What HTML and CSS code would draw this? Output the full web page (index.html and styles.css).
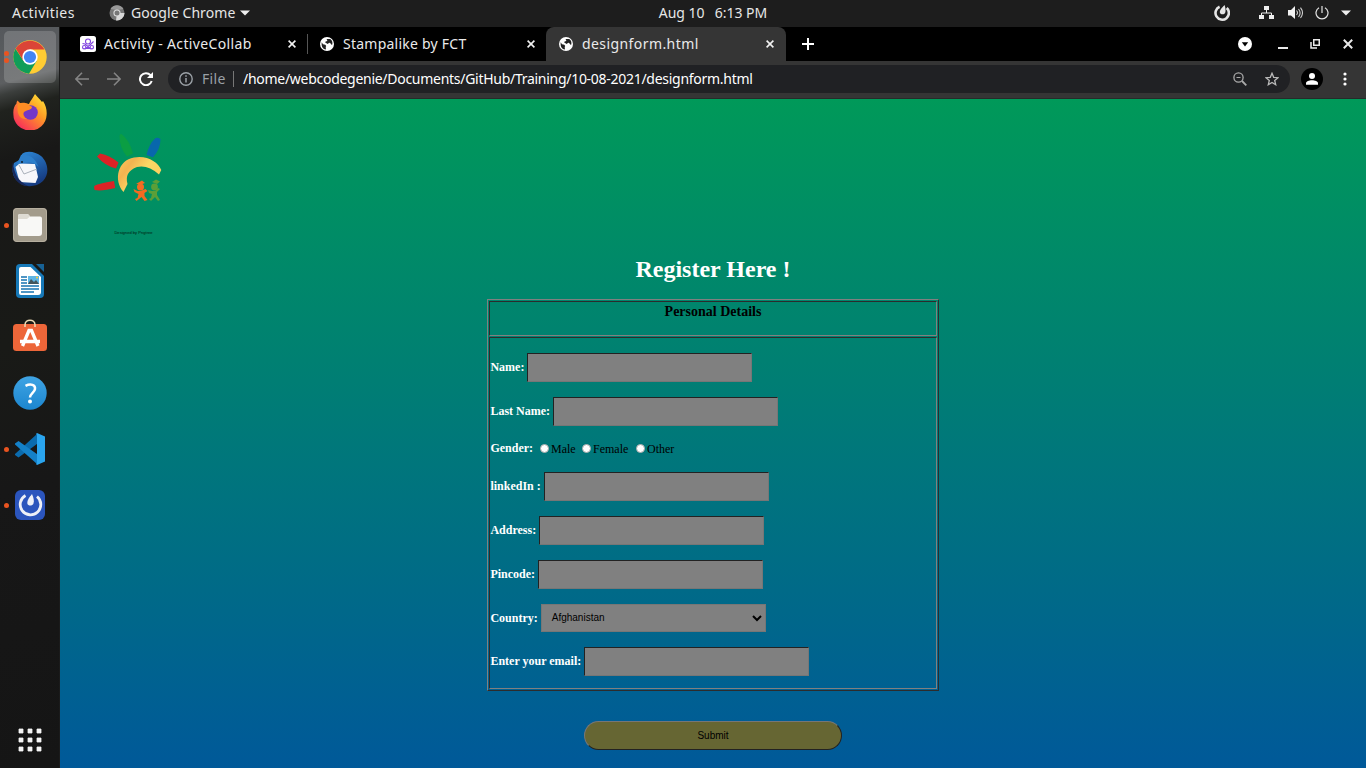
FILE: index.html
```html
<!DOCTYPE html>
<html lang="en">
<head>
<meta charset="utf-8">
<title>designform.html</title>
<link rel="stylesheet" href="styles.css">
</head>
<body>
<svg width="0" height="0" class="defs">
  <defs>
    <symbol id="globe" viewBox="0 0 14 14"><circle cx="7" cy="7" r="7" fill="#fff"/><path d="M1.7 5.2 3 7.3l2.3.4.9 1.4-.5 1 .3 2.4C3 12.200 1.200 9.700 1.700 5.200ZM6.600 2h3.600c2.300 1.400 2.700 3.900 1.900 6-1.200-.2-1.400-2.200-2.900-2.200L7.700 7 5.200 5.600l.4-1 1.800-.7Z" fill="#222"/></symbol>
    <symbol id="x" viewBox="0 0 8 8"><path d="m.6.6 6.800 6.800M7.400.6.6 7.400" stroke="#f1f1f1" stroke-width="1.600"/></symbol>
    <linearGradient id="blue" x2="0" y2="1"><stop stop-color="#3fa4e4"/><stop offset="1" stop-color="#1c86cf"/></linearGradient>
    <linearGradient id="fox" x1="1" y1="0" x2=".2" y2="1"><stop stop-color="#fff13b"/><stop offset=".45" stop-color="#ff9b25"/><stop offset="1" stop-color="#f7275e"/></linearGradient>
    <linearGradient id="bird" x2=".5" y2="1"><stop stop-color="#2f8fe0"/><stop offset="1" stop-color="#163c82"/></linearGradient>
    <linearGradient id="sun" x2="1" y2=".6"><stop stop-color="#fbc95c"/><stop offset=".3" stop-color="#f3b350"/><stop offset=".6" stop-color="#fbd765"/><stop offset="1" stop-color="#fbcf5c"/></linearGradient>
  </defs>
</svg>
<div class="desktop">
  <header class="topbar">
    <div class="top-left">
      <span class="activities">Activities</span>
      <svg class="mono-chrome" width="16" height="16" viewBox="0 0 16 16"><circle cx="8" cy="8" r="7.500" fill="#777"/><path d="M8 8h7.500A7.500 7.500 0 0 1 7 15.400Z" fill="#d8d8d8"/><path d="M1.500 4A7.500 7.500 0 0 1 14.500 4L8 5Z" fill="#999"/><circle cx="8" cy="8" r="3.600" fill="#ddd"/><circle cx="8" cy="8" r="2.500" fill="#777"/></svg>
      <span class="appname">Google Chrome</span>
      <svg width="10" height="6" viewBox="0 0 10 6"><path d="M0 .5h10L5 5.500Z" fill="#eee"/></svg>
    </div>
    <div class="clock"><span>Aug 10</span><span>6:13 PM</span></div>
    <div class="tray">
      <svg width="16" height="16" viewBox="0 0 16 16"><path d="M5.600 1.800A6.700 6.700 0 1 0 12.700 3" fill="none" stroke="#e5e5e5" stroke-width="2.600"/><path d="M10.600 0c.8 2.500 1.300 5.700.7 7.400-.8 2.300-4.400 2.600-5.300.5C5.200 5.500 8 2.700 10.600 0Z" fill="#e5e5e5"/></svg>
      <svg class="net" width="15" height="14" viewBox="0 0 15 14"><path d="M5 0h5v4H5ZM0 9h5v4H0ZM10 9h5v4h-5Z" fill="#eee"/><path d="M7.500 4v3M2.500 9.500V7h10v2.500" fill="none" stroke="#eee"/></svg>
      <svg class="vol" width="15" height="14" viewBox="0 0 15 14"><path d="M0 4h3l4-4v13L3 9.500H0Z" fill="#f1f1f1"/><path d="M8.500 4.500q2 2.200 0 4.500M10.500 3q3.200 4 0 8M12.500 1.600q4 5.400 0 10.400" fill="none" stroke="#ccc" stroke-width="1.100"/></svg>
      <svg class="pow" width="14" height="14" viewBox="0 0 14 14"><path d="M4 1.700a6 6 0 1 0 6 0M7 0v7" fill="none" stroke="#e5e5e5" stroke-width="1.200"/></svg>
      <svg class="caret" width="10" height="6" viewBox="0 0 10 6"><path d="M0 .5h10L5 5.500Z" fill="#eee"/></svg>
    </div>
  </header>
  <div class="workspace">
    <nav class="dock">
      <div class="app running active"><i class="dot"></i><i class="dot"></i>
        <svg width="34" height="34" viewBox="0 0 34 34"><circle cx="17" cy="17" r="16.700" fill="#fc3"/><path d="M2.500 8.700A16.700 16.700 0 0 0 16 33.700L23.600 21 17 17 10.500 21Z" fill="#0f9d58"/><path d="M2.700 8.500 10.500 21 17 9.500h14.500A16.700 16.700 0 0 0 2.700 8.500Z" fill="#db4437"/><circle cx="17" cy="17" r="7.700" fill="#fff"/><circle cx="17" cy="17" r="6.100" fill="#4285f4"/></svg></div>
      <div class="app"><svg class="firefox" width="34" height="36" viewBox="0 0 34 36"><path d="M22 0c2 3 5 5 7 8l1-1c3 5 4 9 3.600 14A16.600 16 0 0 1 .4 20C0 16 1 12 3.500 9.500c0-1.500.5-2 1-3l3 3c3-.5 6-.5 8.500.5C17 7 20 4 22 0Z" fill="url(#fox)"/><circle cx="17.500" cy="18.500" r="7.300" fill="#7437c7"/><path d="M5 9.500c4-1 8-1 10.500 1 1 1.500 3.500 1.500 3.500 3-1 2.500-4 2-6 3.500C9 18 9 23 14 25 7 26 3 20 5 9.500Z" fill="#ff8d24"/></svg></div>
      <div class="app"><svg width="36" height="36" viewBox="0 0 36 36"><path d="M10 3c5-4 14-2 19 2 7 6 9 18 2 25-6 6-17 7-23 2C1 28-1 20 2 12l7-4Z" fill="url(#bird)"/><path d="m3.500 16 4-3.500L23 13l3 13-2.500 6-16-1Z" fill="#f7f7fa"/><path d="m7 14 5 9 13-5" fill="none" stroke="#aab1bb"/><path d="M9 4c7-1 14 2 17.500 12C20 9 15 12 5 13Z" fill="#2d7fcb"/><path d="M1 11c1 12 5 19 15 24C5 35-2 24 1 11Z" fill="#17285b"/><circle cx="10" cy="11" r="1.100" fill="#123"/></svg></div>
      <div class="app running"><i class="dot"></i><svg width="34" height="34" viewBox="0 0 34 34"><rect width="34" height="34" rx="4" fill="#a39c8c"/><rect x=".5" y=".5" width="33" height="33" rx="3.500" fill="none" stroke="#b6af9f"/><path d="M5 8q0-2 2-2h7q2 0 3 2.500h10q2 0 2 2V25q0 3-3 3H8q-3 0-3-3Z" fill="#f8f8f6"/><path d="M5 8q0-2 2-2h7q2 0 3 2.500l-3 2.500H5Z" fill="#dedbd3"/></svg></div>
      <div class="app"><svg width="28" height="34" viewBox="0 0 28 34"><path d="M4 0h12l12 12v18q0 4-4 4H4q-4 0-4-4V4q0-4 4-4Z" fill="#1779b8"/><path d="M20 0h8v8Z" fill="#176295"/><path d="M5 3h9.500L25 13v15q0 3-3 3H5q-2 0-2-2V5q0-2 2-2Z" fill="#fff"/><path d="M5 13h6M5 16h6M5 19h6M5 22h18M5 25h18M5 28h13" stroke="#1673b1" stroke-width="1.300"/><path d="M12 12h11v8H12Z" fill="#5eb5e5"/><path d="m12 20 3-5 3 3 2-2 3 4Z" fill="#43545b"/><circle cx="21" cy="13.500" r="1" fill="#fc3"/></svg></div>
      <div class="app"><svg class="bag" width="34" height="34" viewBox="0 0 34 34"><rect y="5" width="34" height="27" rx="3.500" fill="#ed6639"/><path d="M12 8V6c0-6.500 10-6.500 10 0v2" fill="none" stroke="#eedcb5" stroke-width="1.500"/><path d="M9.500 27 16 11.500h2.500L25 27M7 22.500h20" fill="none" stroke="#fff" stroke-width="3.300"/></svg></div>
      <div class="app"><svg width="34" height="34" viewBox="0 0 34 34"><circle cx="17" cy="17" r="16.700" fill="url(#blue)"/><path d="M12.500 9.800C18 7 22.500 9 22 13c-.4 3.500-5 4.500-5 8.500" fill="none" stroke="#fff" stroke-width="2.500"/><circle cx="17" cy="25.500" r="2" fill="#fff"/></svg></div>
      <div class="app running"><i class="dot"></i><svg width="32" height="32" viewBox="0 0 32 32"><path d="m1 21 22-20 2 8.500L4.500 24.500 1 22Z" fill="#0b6bad"/><path d="M1 10.500 4.500 8 25 22.500l-2 8.500L1 11.500Z" fill="#1481c9"/><path d="m23 0 8 3.500v25L23 32l-1-1 1-1V2l-1-1Z" fill="#2aa5ef"/></svg></div>
      <div class="app running"><i class="dot"></i><svg width="30" height="30" viewBox="0 0 30 30"><rect width="30" height="30" rx="6" fill="#2b55bd"/><path d="M10.500 5.500A10.300 10.300 0 1 0 22 6.500" fill="none" stroke="#edf0f7" stroke-width="2.800"/><path d="M17 4c1.600 4 2.500 7 1.400 9.700-1 2.400-5.400 2.400-6 0C11.800 10.500 14.500 7 17 4Z" fill="#edf0f7"/></svg></div>
      <svg class="grid-apps" width="24" height="24" viewBox="0 0 24 24" fill="#f6f6f6"><path d="M1 1h4v4H1ZM10 1h4v4h-4ZM19 1h4v4h-4ZM1 10h4v4H1ZM10 10h4v4h-4ZM19 10h4v4h-4ZM1 19h4v4H1ZM10 19h4v4h-4ZM19 19h4v4h-4Z" stroke="#f6f6f6" stroke-width=".8" stroke-linejoin="round"/></svg>
    </nav>
    <section class="browser">
      <div class="tabs">
        <div class="tab first">
          <svg class="fav" width="16" height="16" viewBox="0 0 16 16"><rect width="16" height="16" rx="2.500" fill="#fff"/><g fill="none" stroke="#8246e0" stroke-width="1.100"><circle cx="8" cy="5.500" r="2.500"/><circle cx="4.200" cy="11.200" r="1.700"/><circle cx="11.800" cy="11.200" r="1.700"/><path d="M2.500 7.500 5 8l6 5M13.500 5.500 11 8l-6 5M6 12.500h4"/></g></svg>
          <span class="tab-title t1">Activity - ActiveCollab</span><svg class="close" width="8" height="8"><use href="#x"/></svg>
        </div>
        <div class="tab second">
          <svg class="fav" width="14" height="14"><use href="#globe"/></svg>
          <span class="tab-title t2">Stampalike by FCT</span><svg class="close" width="8" height="8"><use href="#x"/></svg>
        </div>
        <div class="tab current">
          <svg class="fav" width="14" height="14"><use href="#globe"/></svg>
          <span class="tab-title t3">designform.html</span><svg class="close" width="8" height="8"><use href="#x"/></svg>
        </div>
        <svg class="plus" width="12" height="12" viewBox="0 0 12 12"><path d="M6 0v12M0 6h12" stroke="#fff" stroke-width="2"/></svg>
        <div class="controls">
          <svg width="14" height="14" viewBox="0 0 14 14"><circle cx="7" cy="7" r="7" fill="#fff"/><path d="M3.800 5.200h6.400L7 9.400Z" fill="#000"/></svg>
          <svg class="min" width="10" height="10" viewBox="0 0 10 10"><path d="M0 9h10" stroke="#e8e8e8" stroke-width="2"/></svg>
          <svg class="rest" width="10" height="10" viewBox="0 0 10 10"><path d="M3.750.750h5.500v5.500h-5.500ZM1 3v6h6" fill="none" stroke="#e8e8e8" stroke-width="1.500"/></svg>
          <svg class="quit" width="10" height="10" viewBox="0 0 10 10"><path d="m.8.8 8.400 8.400M9.200.8.800 9.200" stroke="#e8e8e8" stroke-width="2"/></svg>
        </div>
      </div>
      <div class="toolbar">
        <svg class="back" width="14" height="14" viewBox="0 0 14 14"><path d="M14 7H1M7 .8.900 7 7 13.200" fill="none" stroke="#858585" stroke-width="1.600"/></svg>
        <svg class="forward" width="14" height="14" viewBox="0 0 14 14"><path d="M0 7h13M7 .8 13.100 7 7 13.200" fill="none" stroke="#858585" stroke-width="1.600"/></svg>
        <svg class="reload" width="14" height="14" viewBox="0 0 14 14"><path d="M12.700 9A6 6 0 1 1 11.500 3.200L12.800 4.700" fill="none" stroke="#fff" stroke-width="2"/><path d="M14 0v6H8Z" fill="#fff"/></svg>
        <div class="address">
          <svg width="14" height="14" viewBox="0 0 14 14"><circle cx="7" cy="7" r="6.200" fill="none" stroke="#9aa0a6" stroke-width="1.400"/><path d="M7 6v4.500M7 3.300v1.500" stroke="#9aa0a6" stroke-width="1.500"/></svg>
          <span class="scheme">File</span><span class="bar"></span><span class="url">/home/webcodegenie/Documents/GitHub/Training/10-08-2021/designform.html</span>
          <svg class="mag" width="14" height="14" viewBox="0 0 14 14"><circle cx="5.500" cy="5.500" r="4.600" fill="none" stroke="#aaa" stroke-width="1.300"/><path d="m9 9 4.300 4.300" stroke="#aaa" stroke-width="1.800"/><path d="M3.500 5.500h4" stroke="#aaa"/></svg>
          <svg class="star" width="14" height="14" viewBox="0 0 14 14"><path d="m7 1.300 1.700 4 4.300.4-3.300 2.800 1 4.200L7 10.500l-3.700 2.200 1-4.200L1 5.700l4.300-.4Z" fill="none" stroke="#bbb" stroke-width="1.300"/></svg>
        </div>
        <svg class="profile" width="22" height="22" viewBox="0 0 22 22"><circle cx="11" cy="11" r="11" fill="#000"/><circle cx="11" cy="8" r="3" fill="#fff"/><path d="M5 16.700v-1.500c0-4 12-4 12 0v1.500Z" fill="#fff"/></svg>
        <svg class="more" width="4" height="14" viewBox="0 0 4 14" fill="#fff"><circle cx="2" cy="2" r="1.600"/><circle cx="2" cy="7" r="1.600"/><circle cx="2" cy="12" r="1.600"/></svg>
      </div>
      <main class="page">
        <div class="logo">
          <svg width="70" height="70" viewBox="0 0 70 70">
            <path d="M26.500 3q0-2 2-2 8 6 11.500 19.500L34 23.500Q26.500 15 26.500 3Z" fill="#0b9e43"/>
            <path d="M62 5.500q2-1.500 5.500.5 0 10-7.500 18.200l-6.500-2.200Q56 11 62 5.500Z" fill="#0867ac"/>
            <path d="M4 23.500 7 20.500q10 2 18.500 9L23 35.500Q12 33 4 23.500Z" fill="#dc2226"/>
            <path d="M1 53.500Q2 51 21 48l1.200 7Q9 58.500 1.500 57Z" fill="#dc2226"/>
            <path d="M30.500 59C20 47 25 27 41 24.500 54 22 65 29 68.300 37L66 41.500Q55 31.500 44 34 31 39 34.500 51Z" fill="url(#sun)"/>
            <g fill="#f36b21"><circle cx="47.500" cy="54" r="3.500"/><path d="m43 51 6-3.500 3 2.500-4 1.500ZM44.500 58l-4-2 1 3 4 2-1 4-2.500 1 1.500 2 5-4 3 4 3-1-3-4v-3l3-2-2-2-5 2Z"/></g>
            <g fill="#5b9f38"><circle cx="61.500" cy="54" r="3.400"/><path d="m59 49 4-2.500 4 2-3 2.500ZM59 58l-4-1 1 3 3 1-1 4-2 1 2 2 4-4 3 4 2-1-3-5v-3l3-3-2-1-3 3Z"/></g>
          </svg>
          <span class="credit">Designed by Pngtree</span>
        </div>
        <h1>Register Here !</h1>
        <form class="form">
          <div class="table">
            <div class="cell head">Personal Details</div>
            <div class="cell body">
              <div class="row"><label>Name:</label><input type="text"></div>
              <div class="row"><label>Last Name:</label><input type="text"></div>
              <div class="row gender"><label>Gender:</label><span class="opt male"><i></i>Male</span><span class="opt female"><i></i>Female</span><span class="opt"><i></i>Other</span></div>
              <div class="row"><label>linkedIn :</label><input type="text"></div>
              <div class="row"><label>Address:</label><input type="text"></div>
              <div class="row"><label>Pincode:</label><input type="text"></div>
              <div class="row country"><label>Country:</label><div class="select"><span>Afghanistan</span><svg width="10" height="7" viewBox="0 0 10 7"><path d="m1 1 4 4 4-4" fill="none" stroke="#000" stroke-width="2"/></svg></div></div>
              <div class="row"><label>Enter your email:</label><input type="text"></div>
            </div>
          </div>
          <button type="button" class="submit">Submit</button>
        </form>
      </main>
    </section>
  </div>
</div>
</body>
</html>
```

FILE: styles.css
```css
* { box-sizing: border-box; }
body { margin: 0; overflow: hidden; font-family: "Noto Sans", sans-serif; }
svg { display: block; flex: none; }
.defs { position: absolute; }
.desktop { width: 1366px; height: 768px; display: flex; flex-direction: column; }

.topbar { height: 27px; background: #1d1d1d; color: #e6e6e6; display: grid; grid-template-columns: 1fr auto 1fr; align-items: center; padding-bottom: 1px; font-size: 14px; line-height: 26px; white-space: nowrap; }
.top-left { display: flex; align-items: center; padding-left: 12px; }
.activities { width: 97px; letter-spacing: 0.45px; }
.appname { margin: 0 5px 0 6px; width: 104px; letter-spacing: 0.08px; }
.clock { display: flex; gap: 10px; margin-left: 60px; }
.tray { display: flex; align-items: center; justify-content: flex-end; padding-right: 15px; }
.net { margin-left: 29px; }
.vol { margin-left: 14px; }
.pow { margin-left: 12px; }
.caret { margin-left: 12px; }

.workspace { flex: 1; display: flex; min-height: 0; }
.dock { width: 60px; display: flex; flex-direction: column; padding: 2px 0 16px; border-right: 1px solid #1b1b1b; background: linear-gradient(165deg, #55585c 0, #5d5f61 55px, #3b3e3c 66px, #20221e 82px, #181817 130px, #191a17 310px, #171717 450px, #151515 100%); }
.app { height: 56px; position: relative; display: flex; align-items: center; justify-content: center; }
.active { height: 52px; margin: 2px 3px 2px 4px; border-radius: 5px; background: rgba(255,255,255,.17); }
.dot { position: absolute; left: 4px; top: 26px; width: 5px; height: 5px; border-radius: 50%; background: #e95420; }
.active .dot { left: 0; top: 20px; }
.active .dot + .dot { top: 27px; }
.firefox { margin-top: -3px; }
.bag { margin-top: -3px; }
.grid-apps { margin: auto auto 0 18px; }

.browser { flex: 1; min-width: 0; display: flex; flex-direction: column; }
.tabs { height: 34px; background: #000; display: flex; align-items: center; color: #eaeaea; }
.tab { height: 34px; display: flex; align-items: center; }
.tab-title { font-size: 14px; line-height: 34px; white-space: nowrap; flex: 1; margin-left: 9px; }
.t1 { margin-left: 8px; letter-spacing: 0.36px; }
.t2 { letter-spacing: 0.24px; }
.t3 { letter-spacing: 0.42px; }
.first { width: 247px; padding: 0 11px 0 20px; }
.second { width: 239px; padding: 0 11px 0 13px; background: linear-gradient(#555, #555) 0 50% / 1px 20px no-repeat; }
.current { width: 240px; padding: 0 12px 0 13px; background: #353535; border-radius: 8px 8px 0 0; }
.plus { margin-left: 16px; }
.controls { margin-left: auto; margin-right: 13px; display: flex; align-items: center; }
.min { margin-left: 26px; }
.rest { margin-left: 22px; }
.quit { margin-left: 23px; }

.toolbar { height: 38px; background: #353535; border-bottom: 1px solid #262b29; display: flex; align-items: center; padding: 0 19px 1px 15px; }
.forward { margin-left: 18px; }
.reload { margin-left: 18px; }
.address { flex: 1; height: 28px; margin-left: 15px; border-radius: 14px; background: #202124; display: flex; align-items: center; padding: 0 11px; font-size: 14px; line-height: 28px; color: #fff; white-space: nowrap; }
.scheme { width: 31px; margin-left: 9px; color: #9aa0a6; letter-spacing: 0.3px; }
.bar { width: 1px; height: 16px; background: #777; }
.url { margin-left: 9px; letter-spacing: -0.28px; }
.mag { margin-left: auto; }
.star { margin-left: 18px; }
.profile { margin-left: 11px; }
.more { margin-left: 20px; }

.page { flex: 1; background: linear-gradient(#009959, #005999); font-family: "Liberation Serif", "Times New Roman", serif; display: flex; flex-direction: column; align-items: center; }
.logo { align-self: flex-start; width: 81px; height: 142px; padding-top: 34px; margin-left: 33px; display: flex; flex-direction: column; align-items: flex-start; }
.credit { align-self: center; font: 4px/8px "Liberation Sans", sans-serif; letter-spacing: 0.04px; color: #001a10; margin-top: 26px; }
h1 { margin: 14px 0 0; font-size: 24px; line-height: 28px; color: #fff; }
.form { display: flex; flex-direction: column; align-items: center; margin-top: 16px; font-size: 12px; }
.table { width: 452px; height: 392px; border: 1px solid; border-color: #808080 #2c2c2c #2c2c2c #808080; padding: 1px; display: flex; flex-direction: column; gap: 1px; }
.cell { border: 1px solid; border-color: #2c2c2c #808080 #808080 #2c2c2c; }
.head { height: 35px; padding-top: 1px; text-align: center; font-size: 14px; font-weight: bold; line-height: 18px; color: #000; }
.body { flex: 1; padding: 15px 0 0 0.4px; display: flex; flex-direction: column; gap: 15px; }
.row { display: flex; align-items: center; gap: 3px; height: 29px; white-space: nowrap; }
.row label { font-weight: bold; color: #fff; line-height: 14px; margin-top: -1px; }
.row input { width: 225px; height: 29px; margin: 0; padding: 0 10px; border: 1px solid; border-color: #222 #767676 #767676 #222; border-radius: 0; background: #808080; }
.gender { height: 16px; gap: 0; }
.gender label { width: 49.600px; margin-top: -2px; }
.opt { display: flex; align-items: center; gap: 2px; line-height: 14px; color: #000; }
.opt i { width: 9px; height: 9px; margin-top: -1px; border-radius: 50%; background: #fff; border: 1px solid #aaa; }
.male { width: 42px; }
.female { width: 54px; }
.country { height: 28px; }
.select { width: 225px; height: 28px; border: 1px solid #767676; background: #808080; display: flex; align-items: center; justify-content: space-between; padding: 0 3px 0 10px; font: 10px/26px "Liberation Sans", Arial, sans-serif; color: #000; }
.submit { width: 258px; height: 29px; margin-top: 30px; padding: 0; border: 1px solid; border-color: #767676 #222 #222 #767676; border-radius: 15px; background: #666633; font: 10px "Liberation Sans", Arial, sans-serif; color: #000; }
```
